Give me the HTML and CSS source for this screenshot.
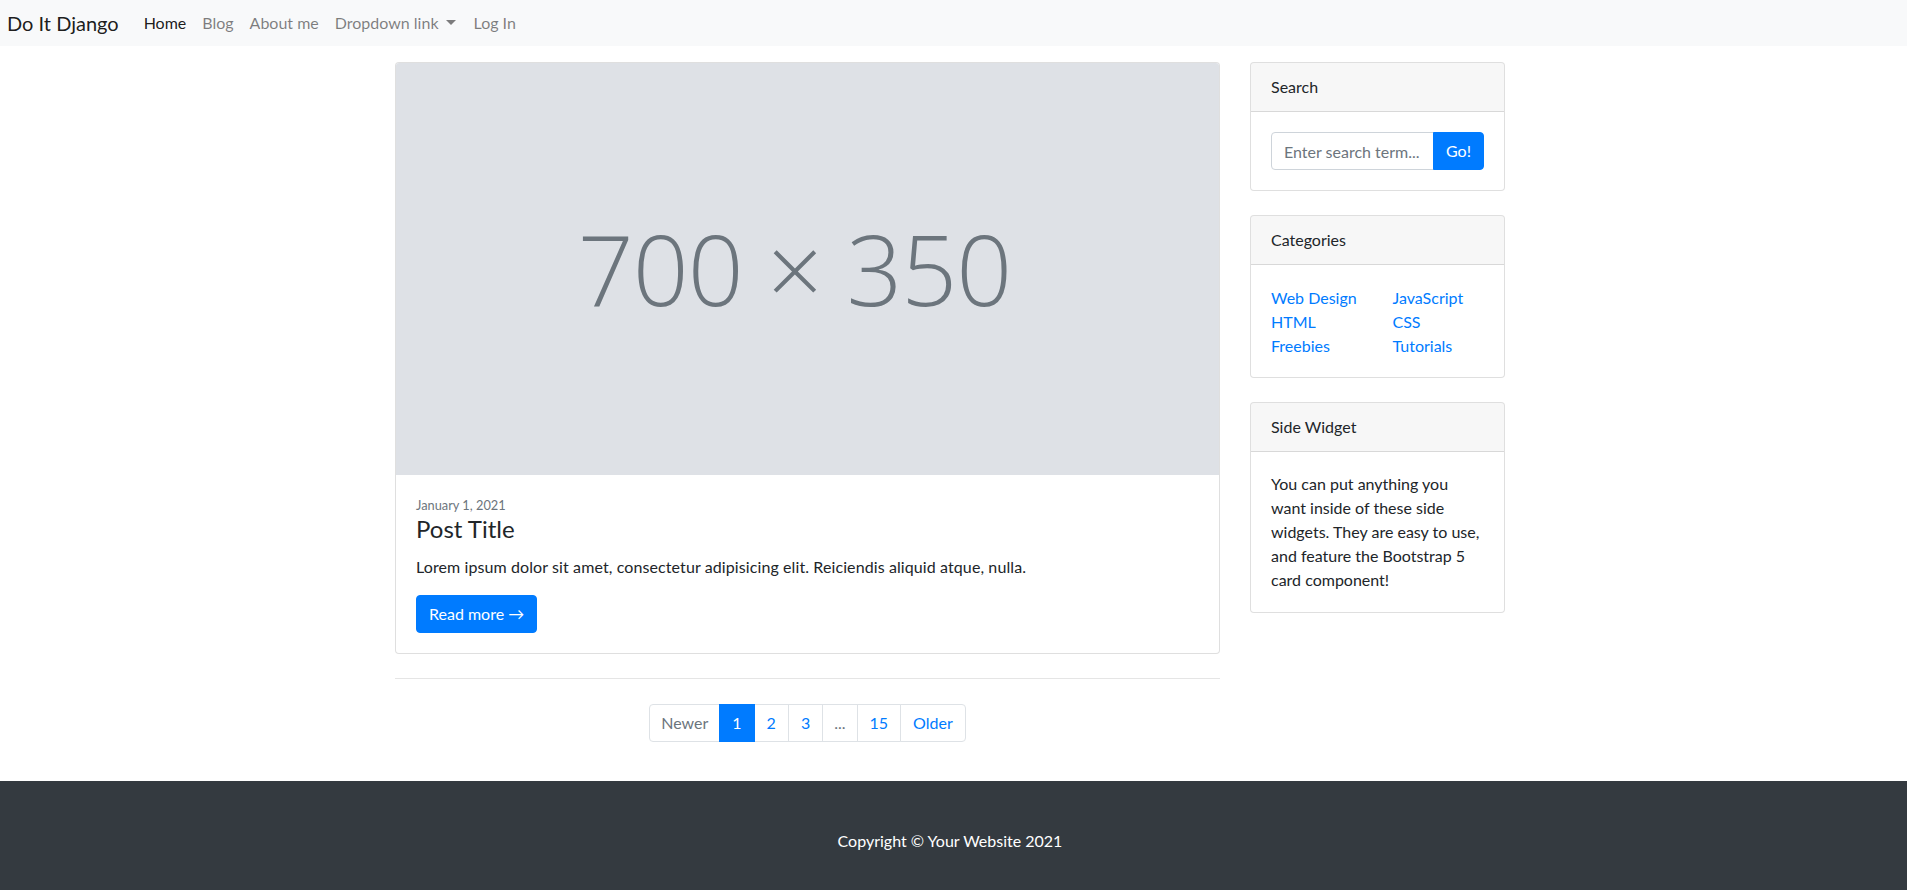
FILE: index.html
```html
<!DOCTYPE html>
<html lang="en">
<head>
<meta charset="utf-8">
<title>Do It Django</title>
<link rel="stylesheet" href="styles.css">
</head>
<body>
<nav class="navbar">
  <a class="brand" href="#">Do It Django</a>
  <ul class="nav">
    <li><a class="nav-link active" href="#">Home</a></li>
    <li><a class="nav-link" href="#">Blog</a></li>
    <li><a class="nav-link" href="#">About me</a></li>
    <li><a class="nav-link dropdown" href="#">Dropdown link</a></li>
    <li><a class="nav-link" href="#">Log In</a></li>
  </ul>
</nav>

<div class="container">
  <main class="main-col">
    <div class="card post">
      <div class="placeholder"><span>700 × 350</span></div>
      <div class="card-body">
        <div class="date">January 1, 2021</div>
        <h2 class="post-title">Post Title</h2>
        <p class="post-text">Lorem ipsum dolor sit amet, consectetur adipisicing elit. Reiciendis aliquid atque, nulla.</p>
        <a class="btn" href="#">Read more →</a>
      </div>
    </div>
    <hr class="divider">
    <ul class="pagination">
      <li><span class="page-link disabled first">Newer</span></li>
      <li><span class="page-link active">1</span></li>
      <li><a class="page-link" href="#">2</a></li>
      <li><a class="page-link" href="#">3</a></li>
      <li><span class="page-link disabled dots">...</span></li>
      <li><a class="page-link" href="#">15</a></li>
      <li><a class="page-link last" href="#">Older</a></li>
    </ul>
  </main>

  <aside class="side-col">
    <div class="card widget">
      <div class="card-header">Search</div>
      <div class="card-body">
        <div class="input-group">
          <input class="search-input" type="text" placeholder="Enter search term...">
          <button class="btn go" type="button">Go!</button>
        </div>
      </div>
    </div>

    <div class="card widget">
      <div class="card-header">Categories</div>
      <div class="card-body cat-body">
        <div class="cat-grid">
          <ul class="cat-list">
            <li><a href="#">Web Design</a></li>
            <li><a href="#">HTML</a></li>
            <li><a href="#">Freebies</a></li>
          </ul>
          <ul class="cat-list">
            <li><a href="#">JavaScript</a></li>
            <li><a href="#">CSS</a></li>
            <li><a href="#">Tutorials</a></li>
          </ul>
        </div>
      </div>
    </div>

    <div class="card widget">
      <div class="card-header">Side Widget</div>
      <div class="card-body">You can put anything you want inside of these side widgets. They are easy to use, and feature the Bootstrap 5 card component!</div>
    </div>
  </aside>
</div>

<footer class="footer">
  <p class="copyright">Copyright © Your Website 2021</p>
</footer>
</body>
</html>
```

FILE: styles.css
```css
* { box-sizing: border-box; }

html, body {
  margin: 0;
  padding: 0;
}

body {
  font-family: Lato, "Liberation Sans", sans-serif;
  font-size: 16px;
  line-height: 1.5;
  color: #212529;
  background: #fff;
}

a { text-decoration: none; }

/* Navbar */
.navbar {
  height: 46px;
  background: #f8f9fa;
  display: flex;
  align-items: center;
  padding: 0 7px;
}

.brand {
  font-size: 20px;
  color: rgba(0,0,0,.9);
  margin-right: 17px;
  line-height: 30px;
}

.nav {
  list-style: none;
  margin: 0;
  padding: 0;
  display: flex;
}

.nav-link {
  display: block;
  padding: 0 8px;
  color: rgba(0,0,0,.5);
}

.nav-link.active { color: rgba(0,0,0,.9); }

.dropdown::after {
  content: "";
  display: inline-block;
  margin-left: 7px;
  margin-right: 2px;
  vertical-align: 4px;
  border-top: 5px solid;
  border-left: 5px solid transparent;
  border-right: 5px solid transparent;
}

/* Layout */
.container {
  width: 1140px;
  margin-left: calc(50% - 573.5px);
  display: grid;
  grid-template-columns: 855px 285px;
  align-items: start;
}

.main-col {
  padding: 16px 15px 39px;
}

.side-col {
  padding: 16px 15px 0;
}

/* Cards */
.card {
  border: 1px solid rgba(0,0,0,.125);
  border-radius: 4px;
  background: #fff;
  overflow: hidden;
  margin-bottom: 24px;
}

.card-header {
  padding: 12px 20px;
  background: rgba(0,0,0,.03);
  border-bottom: 1px solid rgba(0,0,0,.125);
}

.card-body {
  padding: 20px;
}

.cat-body {
  padding: 21px 20px 19px;
}

.placeholder {
  height: 412px;
  background: #dee1e6;
  display: flex;
  align-items: center;
  justify-content: center;
  padding-right: 26px;
}

.placeholder span {
  font-family: "Open Sans", sans-serif;
  font-weight: 300;
  font-size: 98px;
  color: #6c757d;
  line-height: 1;
  letter-spacing: -1px;
  padding-bottom: 2px;
}

.date {
  font-size: 12.8px;
  line-height: 19px;
  color: #6c757d;
  padding-top: 1px;
}

.post-title {
  margin: 0 0 11px;
  font-size: 24px;
  font-weight: 400;
  line-height: 1.2;
}

.post-text {
  margin: 0 0 16px;
  letter-spacing: 0.1px;
}

.btn {
  display: inline-block;
  background: #007bff;
  color: #fff;
  border: 1px solid #007bff;
  border-radius: 4px;
  padding: 6px 12px;
  font: inherit;
  line-height: 24px;
}

.divider {
  margin: 0;
  border: 0;
  border-top: 1px solid rgba(0,0,0,.1);
}

/* Pagination */
.pagination {
  list-style: none;
  margin: 25px 0 0;
  padding: 0;
  display: flex;
  justify-content: center;
}

.page-link {
  display: block;
  padding: 8px 12px;
  line-height: 20px;
  border: 1px solid #dee2e6;
  margin-left: -1px;
  color: #007bff;
  background: #fff;
}

.page-link.first {
  margin-left: 0;
  border-radius: 4px 0 0 4px;
  padding: 8px 11px;
}

.page-link.dots { padding: 8px 11px; }

.page-link.last {
  border-radius: 0 4px 4px 0;
}

.page-link.disabled { color: #6c757d; }

.page-link.active {
  background: #007bff;
  border-color: #007bff;
  color: #fff;
  position: relative;
  z-index: 1;
}

/* Search */
.input-group {
  display: flex;
}

.search-input {
  flex: 1;
  min-width: 0;
  height: 38px;
  padding: 6px 12px;
  font: inherit;
  color: #495057;
  border: 1px solid #ced4da;
  border-radius: 4px 0 0 4px;
  outline: none;
}

.search-input::placeholder { color: #6c757d; }

.go {
  border-radius: 0 4px 4px 0;
  margin-left: -1px;
  cursor: pointer;
}

/* Categories */
.cat-grid {
  display: grid;
  grid-template-columns: 121.5px 1fr;
}

.cat-list {
  list-style: none;
  margin: 0;
  padding: 0;
}

.cat-list a { color: #007bff; }

/* Footer */
.footer {
  background: #343a40;
  padding: 48px 0 37px;
}

.copyright {
  margin: 0;
  text-align: center;
  color: #fff;
  width: 1140px;
  margin-left: calc(50% - 573.5px);
}
```
